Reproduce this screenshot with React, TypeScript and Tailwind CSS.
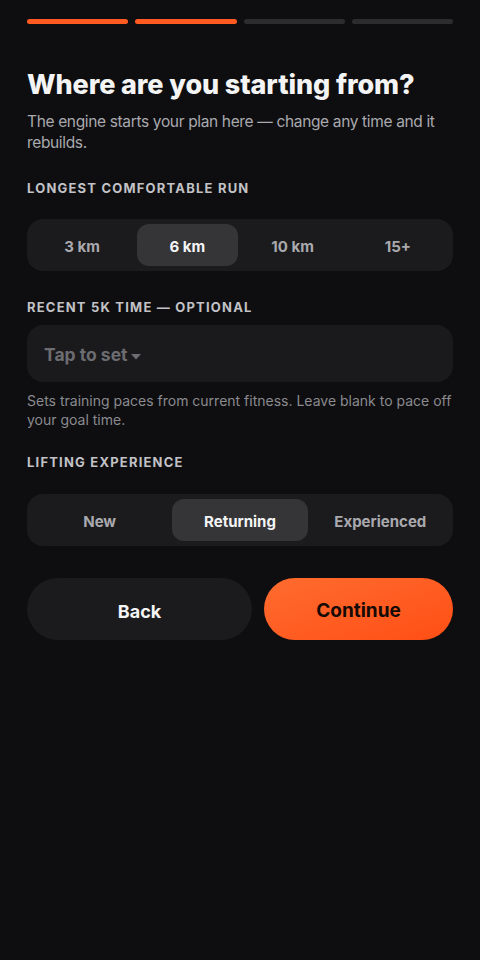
import React from "react";

const font = { fontFamily: "Inter, 'Noto Sans', sans-serif" };

function Segmented({ options, selected }: { options: string[]; selected: number }) {
  return (
    <div className="flex h-[52px] gap-[5px] rounded-[16px] bg-[#1b1b1e] p-[5px]">
      {options.map((o, i) => (
        <div
          key={o}
          className={
            i === selected
              ? "flex flex-1 items-center justify-center rounded-[12px] bg-[#353538] pt-[5px] text-[15px] font-bold text-[#f4f4f5]"
              : "flex flex-1 items-center justify-center rounded-[12px] pt-[5px] text-[15px] font-bold text-[#a9a9ae]"
          }
        >
          {o}
        </div>
      ))}
    </div>
  );
}

export default function App() {
  return (
    <div className="min-h-[960px] w-full bg-[#0e0e10] px-[27px] pt-[19px]" style={font}>
      <div className="flex gap-[7px]">
        <div className="h-[5px] flex-1 rounded-full bg-[#ff5a1f]" />
        <div className="h-[5px] flex-1 rounded-full bg-[#ff5a1f]" />
        <div className="h-[5px] flex-1 rounded-full bg-[#2c2c2f]" />
        <div className="h-[5px] flex-1 rounded-full bg-[#2c2c2f]" />
      </div>

      <h1 className="mt-[44px] text-[27px] font-extrabold leading-[34px] tracking-[-0.1px] text-[#f4f4f5]">
        Where are you starting from?
      </h1>
      <p className="mt-[9px] text-[15.5px] leading-[21px] tracking-[-0.35px] text-[#a9a9ae]">
        The engine starts your plan here — change any time and it rebuilds.
      </p>

      <div className="mt-[26px] text-[13px] font-bold tracking-[1.2px] text-[#c2c2c7]">
        LONGEST COMFORTABLE RUN
      </div>
      <div className="mt-[20px]">
        <Segmented options={["3 km", "6 km", "10 km", "15+"]} selected={1} />
      </div>

      <div className="mt-[27px] text-[13px] font-bold tracking-[1.2px] text-[#c2c2c7]">
        RECENT 5K TIME — OPTIONAL
      </div>
      <div className="mt-[8px] flex h-[57px] items-center rounded-[16px] bg-[#1a1a1d] px-[17px] pt-[4px]">
        <span className="text-[17.5px] font-bold text-[#6c6c71]">Tap to set</span>
        <svg className="ml-[4px] mt-[2px]" width="10" height="6" viewBox="0 0 10 6">
          <path d="M0 0 L10 0 L5 5.5 Z" fill="#6c6c71" />
        </svg>
      </div>
      <p className="mt-[9px] text-[14px] leading-[19px] text-[#8a8a8f]">
        Sets training paces from current fitness. Leave blank to pace off your goal time.
      </p>

      <div className="mt-[24px] text-[13px] font-bold tracking-[1.2px] text-[#c2c2c7]">
        LIFTING EXPERIENCE
      </div>
      <div className="mt-[21px]">
        <Segmented options={["New", "Returning", "Experienced"]} selected={1} />
      </div>

      <div className="mt-[32px] flex gap-[12px]">
        <button className="h-[62px] w-[225px] rounded-full bg-[#1b1b1e] pt-[5px] text-[18px] font-bold text-[#f4f4f5]">
          Back
        </button>
        <button className="h-[62px] flex-1 rounded-full bg-gradient-to-br from-[#ff6b2e] to-[#ff4e14] pt-[5px] text-[19px] font-bold text-[#150a05]">
          Continue
        </button>
      </div>
    </div>
  );
}
